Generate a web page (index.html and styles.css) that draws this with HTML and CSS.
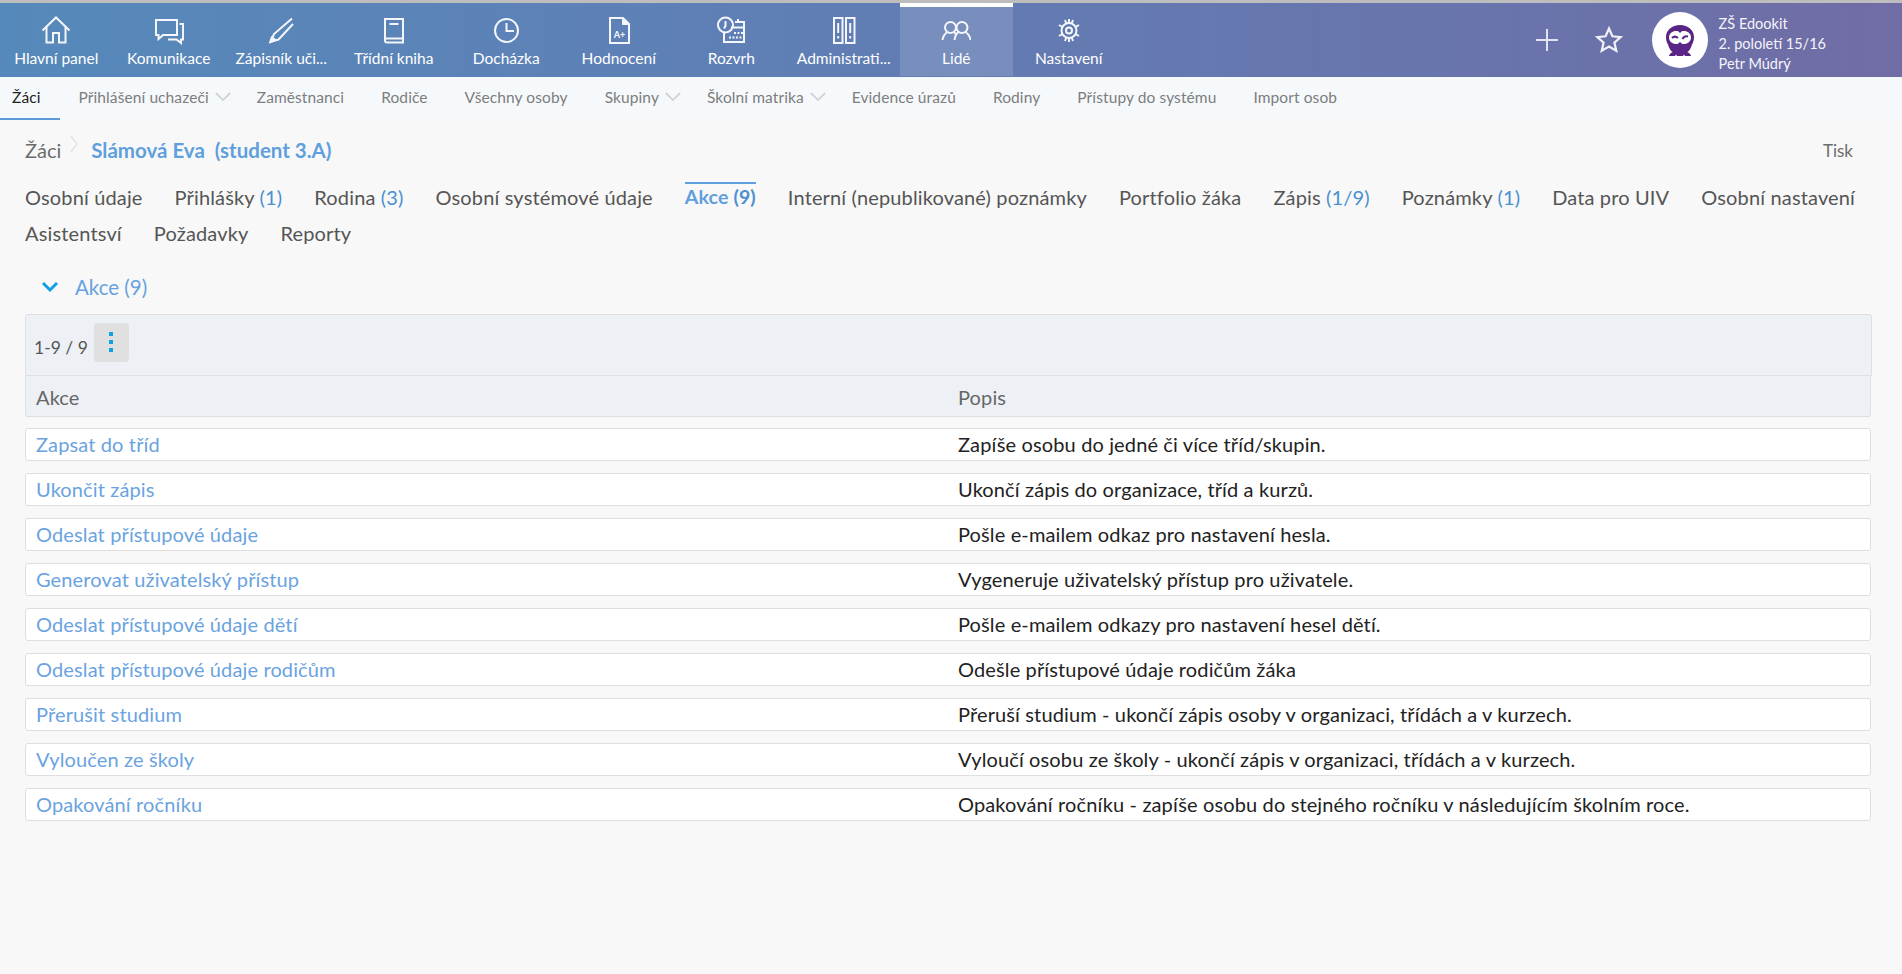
FILE: index.html
```html
<!DOCTYPE html>
<html lang="cs">
<head>
<meta charset="utf-8">
<title>Žáci - Slámová Eva</title>
<link rel="stylesheet" href="styles.css">
</head>
<body>
<header class="topbar">
  <nav class="mainnav">
    <a class="navitem"><svg class="navicon" viewBox="0 0 30 30"><path d="M1.500 15.500 15 2.500l13.500 13M5.500 12v15.500H12V18h6v9.500h6.500V12"/></svg><span>Hlavní panel</span></a>
    <a class="navitem"><svg class="navicon" viewBox="0 0 30 30"><path d="M2 5h21v15H9l-4.500 4v-4H2zM25.500 9H29v15.500h-2V28l-4.500-3.500H14"/></svg><span>Komunikace</span></a>
    <a class="navitem"><svg class="navicon" viewBox="0 0 30 30"><path d="M26 3.500 8 19l-3.500 8 8-2.500L27 9"/><path class="fill" d="M3.500 28l2-6.500 5 3.500z"/></svg><span>Zápisník uči...</span></a>
    <a class="navitem"><svg class="navicon" viewBox="0 0 30 30"><path d="M6 4h18v23.500H8a2 2 0 0 1-2-2zM6 23.500h18M10.500 9h9"/></svg><span>Třídní kniha</span></a>
    <a class="navitem"><svg class="navicon" viewBox="0 0 30 30"><circle cx="15.500" cy="15.500" r="11.500"/><path d="M15.500 8v8H23"/></svg><span>Docházka</span></a>
    <a class="navitem"><svg class="navicon" viewBox="0 0 30 30"><path d="M6 3h13l6 6v19H6z"/><path class="fill" d="M18.500 3l6.500 6.500h-6.500z"/><text class="grade" x="15.500" y="22.500">A+</text></svg><span>Hodnocení</span></a>
    <a class="navitem"><svg class="navicon" viewBox="0 0 30 30"><circle cx="9.500" cy="10" r="7.500"/><path d="M9.500 6v5l-1.500 2.500M19 7h9v20H8v-9M15 12.500h13M22 4v3"/><path class="dots" d="M13 22.500h14M18 18h9"/></svg><span>Rozvrh</span></a>
    <a class="navitem"><svg class="navicon" viewBox="0 0 30 30"><path d="M5 3h8.500v25H5zM17 3h8.500v25H17zM9.200 8v10M21.200 8v10M9.200 21v2.500M21.200 21v2.500"/></svg><span>Administrati...</span></a>
    <a class="navitem active"><svg class="navicon" viewBox="0 0 30 30"><circle cx="9.500" cy="12.500" r="5.500"/><circle cx="21" cy="12.500" r="5.500"/><path d="M1.500 25c.5-4 2.500-6.500 5.500-8.500M12.500 16.500c1 .8 2 1.800 2.500 3M18 16.500c-2.500 2-4 4.500-4.500 8.500M24 16.500c3 2 5 4.500 5.500 8.500"/></svg><span>Lidé</span></a>
    <a class="navitem"><svg class="navicon" viewBox="0 0 30 30"><circle cx="15" cy="15.500" r="7.500"/><circle cx="15" cy="15.500" r="3"/><path d="M15 4v4M15 23v4M5 10l3.500 2M21.500 19l3.500 2M5 21l3.500-2M21.500 12l3.500-2M11 5l1.500 4M19 5l-1.500 4M11 26l1.500-4M19 26l-1.500-4"/></svg><span>Nastavení</span></a>
  </nav>
  <div class="actions">
    <svg class="plus" viewBox="0 0 22 22"><path d="M11 0v22M0 11h22"/></svg>
    <svg class="star" viewBox="0 0 28 28"><path d="M14 2.500l3.400 7.800 8.300.8-6.300 5.500 1.900 8.200L14 20.500l-7.300 4.300 1.900-8.200-6.300-5.500 8.300-.8z"/></svg>
    <div class="avatar">
      <svg class="owl" viewBox="0 0 28 31">
        <path class="owl-body" d="M14 0C6 0 0 5 0 12c0 3 .8 5.500 2 7.500C3 23 4.500 26 7 27.500h14c2.500-1.500 4-4.500 5-8 1.200-2 2-4.500 2-7.500C28 5 22 0 14 0z"/>
        <path class="owl-body" d="M3 31c.5-2 2-3.500 4-4h14c2 .5 3.500 2 4 4h-6l-1-1.500-1 1.500h-6l-1-1.500L9 31z"/>
        <path class="owl-face" d="M3 12.500C3 8 7 5.500 11 6c1.500.2 2.500 1 3 2.500.5-1.500 1.500-2.300 3-2.500 4-.5 8 2 8 6.500 0 4-3.500 6.500-7 6.500-1.800 0-3.200-.8-4-2.300-.8 1.500-2.200 2.300-4 2.300-3.500 0-7-2.500-7-6.500z"/>
        <path class="owl-eye" d="M6 13c1.500-1.500 4-1.700 6 0M16.500 14c1-2 3-3 5.500-2.500"/>
      </svg>
    </div>
    <div class="userinfo">
      <div>ZŠ Edookit</div>
      <div>2. pololetí 15/16</div>
      <div>Petr Múdrý</div>
    </div>
  </div>
</header>

<nav class="subnav">
  <a class="subitem current">Žáci</a>
  <a class="subitem">Přihlášení uchazeči<svg class="subchev" viewBox="0 0 18 11"><path d="M1 1l8 8 8-8"/></svg></a>
  <a class="subitem">Zaměstnanci</a>
  <a class="subitem">Rodiče</a>
  <a class="subitem">Všechny osoby</a>
  <a class="subitem">Skupiny<svg class="subchev" viewBox="0 0 18 11"><path d="M1 1l8 8 8-8"/></svg></a>
  <a class="subitem">Školní matrika<svg class="subchev" viewBox="0 0 18 11"><path d="M1 1l8 8 8-8"/></svg></a>
  <a class="subitem">Evidence úrazů</a>
  <a class="subitem">Rodiny</a>
  <a class="subitem">Přístupy do systému</a>
  <a class="subitem">Import osob</a>
</nav>

<main class="content">
  <div class="crumbs">
    <a class="crumb">Žáci</a>
    <svg class="crumbsep" viewBox="0 0 8 18"><path d="M1 1l6 8-6 8"/></svg>
    <a class="crumb-current">Slámová Eva &nbsp;(student 3.A)</a>
    <a class="print">Tisk</a>
  </div>

  <div class="tabs">
    <a class="tab">Osobní údaje</a>
    <a class="tab">Přihlášky <span class="count">(1)</span></a>
    <a class="tab">Rodina <span class="count">(3)</span></a>
    <a class="tab">Osobní systémové údaje</a>
    <a class="tab selected">Akce <span class="count">(9)</span></a>
    <a class="tab">Interní (nepublikované) poznámky</a>
    <a class="tab">Portfolio žáka</a>
    <a class="tab">Zápis <span class="count">(1/9)</span></a>
    <a class="tab">Poznámky <span class="count">(1)</span></a>
    <a class="tab">Data pro UIV</a>
    <a class="tab">Osobní nastavení</a>
    <a class="tab">Asistentsví</a>
    <a class="tab">Požadavky</a>
    <a class="tab">Reporty</a>
  </div>

  <div class="section-head">
    <svg class="section-chev" viewBox="0 0 18 12"><path d="M2 2l7 7 7-7"/></svg>
    <span>Akce (9)</span>
  </div>

  <section class="grid">
    <div class="grid-head">
      <div class="toolbar">
        <span class="pager">1-9 / 9</span>
        <button class="morebtn" type="button" aria-label="Více"><i></i><i></i><i></i></button>
      </div>
      <div class="row labels"><div>Akce</div><div>Popis</div></div>
    </div>
    <div class="row item"><a>Zapsat do tříd</a><div>Zapíše osobu do jedné či více tříd/skupin.</div></div>
    <div class="row item"><a>Ukončit zápis</a><div>Ukončí zápis do organizace, tříd a kurzů.</div></div>
    <div class="row item"><a>Odeslat přístupové údaje</a><div>Pošle e-mailem odkaz pro nastavení hesla.</div></div>
    <div class="row item"><a>Generovat uživatelský přístup</a><div>Vygeneruje uživatelský přístup pro uživatele.</div></div>
    <div class="row item"><a>Odeslat přístupové údaje dětí</a><div>Pošle e-mailem odkazy pro nastavení hesel dětí.</div></div>
    <div class="row item"><a>Odeslat přístupové údaje rodičům</a><div>Odešle přístupové údaje rodičům žáka</div></div>
    <div class="row item"><a>Přerušit studium</a><div>Přeruší studium - ukončí zápis osoby v organizaci, třídách a v kurzech.</div></div>
    <div class="row item"><a>Vyloučen ze školy</a><div>Vyloučí osobu ze školy - ukončí zápis v organizaci, třídách a v kurzech.</div></div>
    <div class="row item"><a>Opakování ročníku</a><div>Opakování ročníku - zapíše osobu do stejného ročníku v následujícím školním roce.</div></div>
  </section>
</main>
</body>
</html>
```

FILE: styles.css
```css
* { box-sizing: border-box; }
html, body { height: 100%; }
body {
  margin: 0;
  overflow: hidden;
  background: #f8f8f8;
  font-family: "Lato", "Noto Sans", sans-serif;
  color: #333;
  border-top: 3px solid #bdbdbd;
}
.topbar {
  display: flex;
  height: 74px;
  background: linear-gradient(90deg, #5689bb 0%, #5f7fb5 40%, #6b72aa 85%, #716ca5 100%);
  color: #fff;
}
.mainnav { display: flex; }
.navitem {
  width: 112.5px;
  height: 73px;
  padding-top: 8px;
  display: flex;
  flex-direction: column;
  align-items: center;
  font-size: 15.5px;
  line-height: 18px;
  white-space: nowrap;
  border-top: 4px solid transparent;
}
.navitem.active { background: rgba(255,255,255,.14); border-top-color: #fff; }
.navitem span { margin-top: 4px; }
.navicon { width: 30px; height: 30px; flex: none; fill: none; stroke: #f4f6fb; stroke-width: 2; }
.navicon .fill { fill: #f4f6fb; stroke-width: 1; }
.navicon .dots { stroke-width: 2; stroke-dasharray: 2 1.500; }
.navicon .grade { fill: #f4f6fb; stroke: none; font-size: 9px; font-weight: 900; text-anchor: middle; }
.actions { margin-left: auto; display: flex; align-items: center; padding-right: 76px; }
.plus { width: 22px; height: 22px; flex: none; fill: none; stroke: #e2e5f1; stroke-width: 2; }
.star { width: 28px; height: 28px; flex: none; margin-left: 37px; fill: none; stroke: #f0f1f8; stroke-width: 2.2; }
.avatar {
  width: 56px;
  height: 56px;
  flex: none;
  margin-left: 29px;
  border-radius: 50%;
  background: #fff;
  display: flex;
  align-items: center;
  justify-content: center;
}
.owl { width: 28px; height: 31px; }
.owl-body { fill: #5a2584; }
.owl-face { fill: #fff; }
.owl-eye { fill: none; stroke: #5a2584; stroke-width: 2; }
.userinfo { margin-left: 11px; font-size: 14.5px; line-height: 20px; color: #f6f4fa; padding-top: 8px; white-space: nowrap; }

.subnav {
  display: flex;
  height: 43px;
  background: #f5f9fc;
  font-size: 15.5px;
  letter-spacing: .1px;
  color: #7d7d7d;
}
.subitem {
  display: flex;
  align-items: center;
  padding: 0 12px 4px;
  margin-right: 13px;
  white-space: nowrap;
}
.subitem.current { color: #222; box-shadow: inset 0 -2px 0 #5b9bd9; padding-right: 19px; margin-right: 7px; }
.subchev { width: 16px; height: 10px; margin-left: 6px; margin-right: -11px; fill: none; stroke: #d2d2d2; stroke-width: 2; }

.content { padding: 0 31px 0 25px; }
.crumbs { display: flex; align-items: center; height: 59px; padding-top: 1px; font-size: 20px; }
.crumb { color: #6b6b6b; }
.crumbsep { width: 8px; height: 18px; margin: 0 13px 12px 9px; fill: none; stroke: #e2e2e2; stroke-width: 1.5; }
.crumb-current { color: #5f9fdd; font-weight: 700; font-size: 20.5px; }
.print { margin-left: auto; margin-right: 18px; color: #6d6d6d; font-size: 17px; }

.tabs { display: flex; flex-wrap: wrap; column-gap: 32px; color: #555; font-size: 20px; letter-spacing: .15px; line-height: 36px; }
.tab { white-space: nowrap; }
.tab.selected {
  color: #5f9fdd;
  font-weight: 700;
  font-size: 19.5px;
  background: linear-gradient(#5f9fdd, #5f9fdd) 0 3px / 100% 2px no-repeat;
}
.count { color: #4a90d0; }

.section-head { display: flex; align-items: center; height: 36px; margin-top: 18px; color: #67a1de; font-size: 20.5px; }
.section-chev { width: 18px; height: 12px; margin: 0 16px; fill: none; stroke: #0ea1e6; stroke-width: 3; }

.grid { margin-top: 9px; }
.grid-head { margin-bottom: 11px; }
.toolbar {
  display: flex;
  align-items: center;
  height: 62px;
  margin-right: -1px;
  padding-left: 8px;
  background: #edf1f5;
  border: 1px solid #dfdfdf;
  border-radius: 3px 3px 0 0;
}
.pager { font-size: 17.5px; color: #555; margin-top: 4px; }
.morebtn {
  width: 35px;
  height: 39px;
  margin-left: 6px;
  margin-top: -6px;
  padding: 0;
  border: 0;
  border-radius: 3px;
  background: #e0e0e0;
  display: flex;
  flex-direction: column;
  align-items: center;
  justify-content: center;
  gap: 4px;
}
.morebtn i { width: 4px; height: 4px; background: #0ea1e6; }
.row {
  display: grid;
  grid-template-columns: 922px 1fr;
  align-items: center;
  padding-left: 10px;
  font-size: 20px;
  letter-spacing: .13px;
}
.labels {
  height: 41px;
  padding-top: 2px;
  color: #666;
  background: #edf1f5;
  border: 1px solid #dfdfdf;
  border-top: 0;
  border-radius: 0 0 3px 3px;
}
.item {
  height: 33px;
  margin-bottom: 12px;
  padding-bottom: 2px;
  background: #fff;
  border: 1px solid #dfdfdf;
  border-radius: 3px;
  color: #222;
}
.item a { color: #6aa3df; }
```
